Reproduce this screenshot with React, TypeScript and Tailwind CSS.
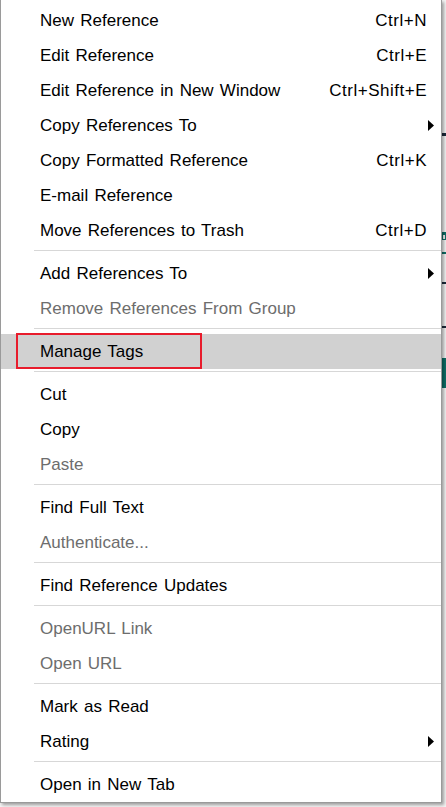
import React from "react";

type Item =
  | { sep: true }
  | {
      sep?: false;
      label: string;
      shortcut?: string;
      sub?: boolean;
      disabled?: boolean;
      active?: boolean;
    };

const items: Item[] = [
  { label: "New Reference", shortcut: "Ctrl+N" },
  { label: "Edit Reference", shortcut: "Ctrl+E" },
  { label: "Edit Reference in New Window", shortcut: "Ctrl+Shift+E" },
  { label: "Copy References To", sub: true },
  { label: "Copy Formatted Reference", shortcut: "Ctrl+K" },
  { label: "E-mail Reference" },
  { label: "Move References to Trash", shortcut: "Ctrl+D" },
  { sep: true },
  { label: "Add References To", sub: true },
  { label: "Remove References From Group", disabled: true },
  { sep: true },
  { label: "Manage Tags", active: true },
  { sep: true },
  { label: "Cut" },
  { label: "Copy" },
  { label: "Paste", disabled: true },
  { sep: true },
  { label: "Find Full Text" },
  { label: "Authenticate...", disabled: true },
  { sep: true },
  { label: "Find Reference Updates" },
  { sep: true },
  { label: "OpenURL Link", disabled: true },
  { label: "Open URL", disabled: true },
  { sep: true },
  { label: "Mark as Read" },
  { label: "Rating", sub: true },
  { sep: true },
  { label: "Open in New Tab" },
];

function Arrow() {
  return (
    <svg width="6" height="11" viewBox="0 0 6 11" className="absolute right-[7px] top-[12px]">
      <path d="M0 0 L6 5.5 L0 11 Z" fill="#000" />
    </svg>
  );
}

export default function App() {
  return (
    <div className="relative flex h-[807px] w-[446px] overflow-hidden bg-[#f3f3f3]">
      <div className="relative h-[803px] w-[442px] shrink-0 border-b border-l border-r border-[#9a9a9a] bg-white pt-[3px] shadow-[2px_2px_3px_rgba(0,0,0,0.35)]">
        {items.map((it, i) =>
          it.sep ? (
            <div key={i} className="h-[8px] pl-[33px] pt-[2px]">
              <div className="h-px bg-[#d7d7d7]" />
            </div>
          ) : (
            <div
              key={i}
              className={`relative flex h-[35px] items-center pl-[39px] pr-[14px] font-['Liberation_Sans',Arial,sans-serif] text-[17px] [word-spacing:1.5px] ${
                it.active ? "bg-[#d1d1d1]" : ""
              } ${it.disabled ? "text-[#6d6d6d]" : "text-black"}`}
            >
              <span className="flex-1">{it.label}</span>
              {it.shortcut && <span className="tracking-[0.5px]">{it.shortcut}</span>}
              {it.sub && <Arrow />}
            </div>
          )
        )}
        <div className="absolute left-[15px] top-[333px] h-[36px] w-[186px] border-2 border-[#e81c2c]" />
      </div>
      <div className="flex flex-1 flex-col">
        <div className="h-[133px]" />
        <div className="h-[3px] bg-[#1b2a3a]" />
        <div className="h-[96px]" />
        <div className="h-[2px] bg-[#0e6e66]" />
        <div className="h-[6px] border border-[#0e6e66]" />
        <div className="h-[12px]" />
        <div className="h-[2px] bg-[#0e6e66]" />
        <div className="h-[28px]" />
        <div className="h-[2px] bg-[#1b2a3a]" />
        <div className="h-[42px]" />
        <div className="h-[2px] bg-[#1b2a3a]" />
        <div className="h-[30px]" />
        <div className="h-[30px] bg-[#0e6e66]" />
      </div>
    </div>
  );
}
